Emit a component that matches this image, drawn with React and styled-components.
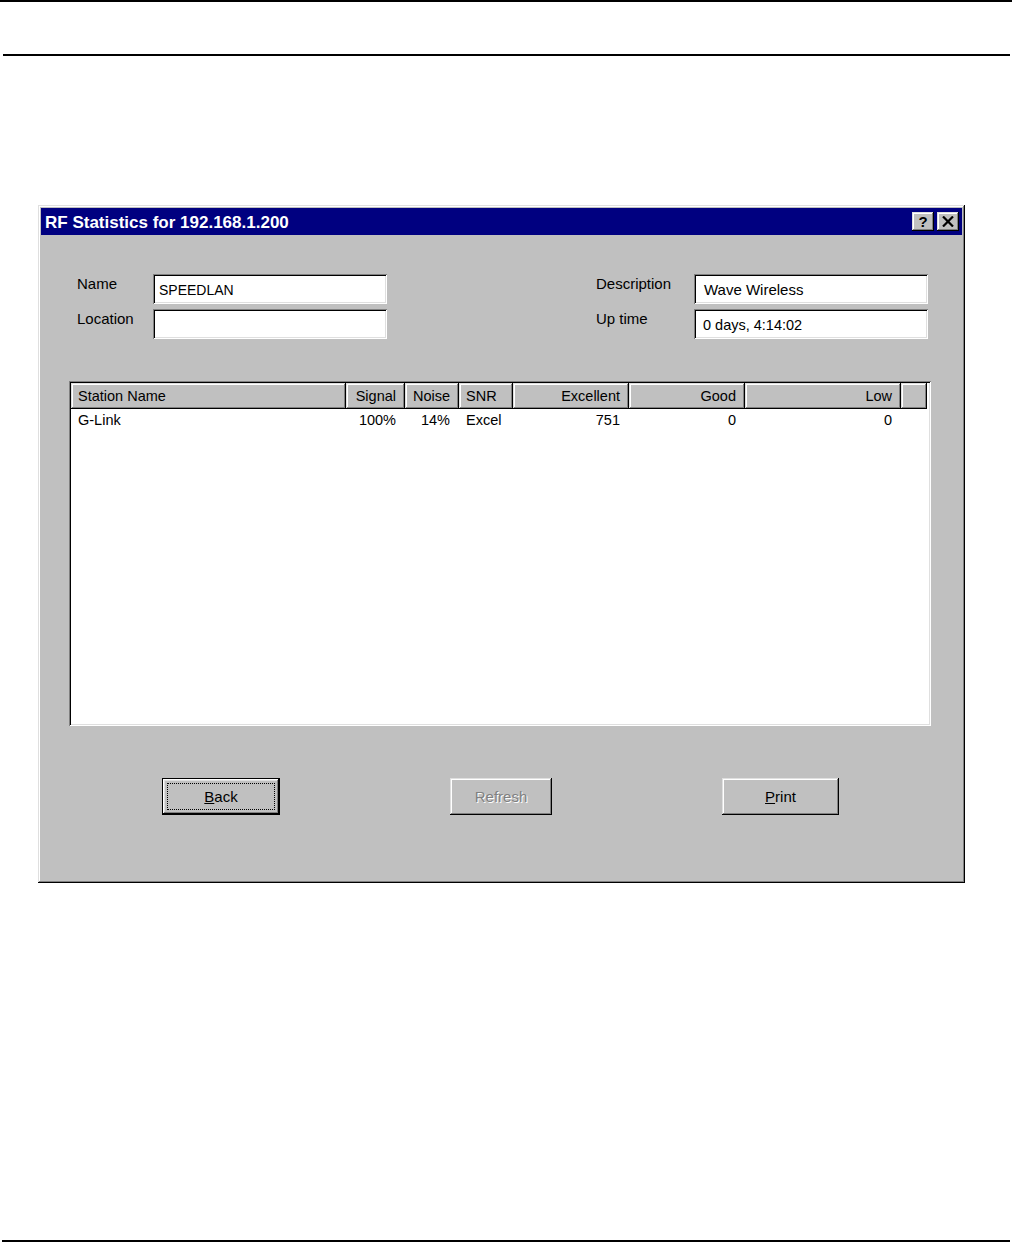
import React from "react";
import styled, { createGlobalStyle, css } from "styled-components";

const GlobalStyle = createGlobalStyle`
  html, body { margin: 0; padding: 0; background: #fff; }
  body { font-family: "Liberation Sans", Arial, sans-serif; color: #000; }
  * { box-sizing: border-box; }
`;

const Page = styled.div`
  width: 1012px;
  height: 1242px;
  display: flex;
  flex-direction: column;
  background: #fff;
`;

const TopRule = styled.div`
  height: 2px;
  background: #000;
`;

const HeaderRule = styled.div`
  height: 2px;
  margin: 52px 2px 0 3px;
  background: #000;
`;

const FooterRule = styled.div`
  height: 2px;
  margin: auto 2px 0 2px;
  background: #000;
`;

const raised = css`
  box-shadow: inset -1px -1px #000, inset 1px 1px #dfdfdf, inset -2px -2px #808080,
    inset 2px 2px #fff;
`;

const sunken = css`
  box-shadow: inset 1px 1px #808080, inset -1px -1px #fff, inset 2px 2px #000,
    inset -2px -2px #dfdfdf;
`;

const Dialog = styled.div`
  margin: 149px 0 0 38px;
  width: 927px;
  height: 678px;
  padding: 3px;
  background: #c0c0c0;
  ${raised};
  display: flex;
  flex-direction: column;
`;

const TitleBar = styled.div`
  height: 27px;
  background: #000080;
  display: flex;
  align-items: center;
  padding: 0 3px 0 4px;
  overflow: hidden;
`;

const TitleText = styled.div`
  flex: 1;
  align-self: flex-start;
  padding-top: 5px;
  color: #fff;
  font-weight: bold;
  font-size: 17px;
  line-height: 20px;
  white-space: nowrap;
`;

const CaptionButtons = styled.div`
  display: flex;
  gap: 3px;
  margin-top: -1px;
`;

const CaptionButton = styled.div`
  width: 22px;
  height: 19px;
  background: #c0c0c0;
  ${raised};
  display: flex;
  align-items: center;
  justify-content: center;
  font-weight: bold;
  font-size: 15px;
  line-height: 1;
  color: #000;
`;

const Body = styled.div`
  flex: 1;
  padding: 39px 34px 0 36px;
  display: flex;
  flex-direction: column;
`;

const FormRow = styled.div`
  display: flex;
  justify-content: space-between;
`;

const FieldGroup = styled.div`
  display: grid;
  grid-template-columns: ${(p) => p.$labelWidth}px 234px;
  row-gap: 5px;
`;

const Label = styled.div`
  font-size: 15px;
  line-height: 20px;
  white-space: nowrap;
`;

const TextBox = styled.div`
  height: 30px;
  background: #fff;
  ${sunken};
  display: flex;
  align-items: center;
  padding: 1px ${(p) => p.$pad || 7}px 0;
  font-size: ${(p) => p.$size || 14.5}px;
  white-space: nowrap;
`;

const ListView = styled.div`
  margin: 42px 0 0 -8px;
  width: 862px;
  height: 345px;
  background: #fff;
  padding: 2px;
  ${sunken};
  font-size: 14.5px;
`;

const Grid = styled.div`
  display: grid;
  grid-template-columns: ${(p) => p.$cols};
`;

const HeaderCell = styled.div`
  height: 26px;
  background: #c0c0c0;
  ${raised};
  display: flex;
  align-items: center;
  justify-content: ${(p) => (p.$align === "right" ? "flex-end" : "flex-start")};
  padding: 0 ${(p) => (p.$align === "right" ? 9 : 2)}px 1px ${(p) => (p.$align === "right" ? 2 : 7)}px;
  font-size: 14.5px;
  white-space: nowrap;
  overflow: hidden;
`;

const Cell = styled.div`
  height: 22px;
  display: flex;
  align-items: center;
  justify-content: ${(p) => (p.$align === "right" ? "flex-end" : "flex-start")};
  padding: 0 ${(p) => (p.$align === "right" ? 9 : 2)}px 0 ${(p) => (p.$align === "right" ? 2 : 7)}px;
  white-space: nowrap;
`;

const ButtonRow = styled.div`
  display: flex;
  margin: 52px 0 0 85px;
  gap: 170px;
`;

const Button = styled.div`
  position: relative;
  width: ${(p) => p.$w}px;
  height: 37px;
  background: #c0c0c0;
  display: flex;
  align-items: center;
  justify-content: center;
  font-size: 15px;
  color: ${(p) => (p.$disabled ? "#808080" : "#000")};
  text-shadow: ${(p) => (p.$disabled ? "1px 1px 0 #fff" : "none")};
  ${(p) =>
    p.$default
      ? css`
          border: 1px solid #000;
          box-shadow: inset -1px -1px #000, inset 1px 1px #fff, inset -2px -2px #808080,
            inset 2px 2px #dfdfdf;
        `
      : raised};
`;

const FocusRing = styled.span`
  position: absolute;
  inset: 4px;
  border: 1px dotted #000;
  pointer-events: none;
`;

const columns = [
  { key: "name", label: "Station Name", w: 275, align: "left" },
  { key: "signal", label: "Signal", w: 59, align: "right" },
  { key: "noise", label: "Noise", w: 54, align: "right" },
  { key: "snr", label: "SNR", w: 54, align: "left" },
  { key: "excellent", label: "Excellent", w: 116, align: "right" },
  { key: "good", label: "Good", w: 116, align: "right" },
  { key: "low", label: "Low", w: 156, align: "right" },
  { key: "pad", label: "", w: 26, align: "left" },
];

const rows = [
  { name: "G-Link", signal: "100%", noise: "14%", snr: "Excel", excellent: "751", good: "0", low: "0", pad: "" },
];

const colTemplate = columns.map((c) => `${c.w}px`).join(" ");

function CloseGlyph() {
  return (
    <svg width="12" height="11" viewBox="0 0 12 11">
      <path d="M1 0.5 L11 10.5 M11 0.5 L1 10.5" stroke="#000" strokeWidth="2.2" />
    </svg>
  );
}

export default function App() {
  return (
    <>
      <GlobalStyle />
      <Page>
        <TopRule />
        <HeaderRule />
        <Dialog>
          <TitleBar>
            <TitleText>RF Statistics for 192.168.1.200</TitleText>
            <CaptionButtons>
              <CaptionButton>?</CaptionButton>
              <CaptionButton>
                <CloseGlyph />
              </CaptionButton>
            </CaptionButtons>
          </TitleBar>
          <Body>
            <FormRow>
              <FieldGroup $labelWidth={76}>
                <Label>Name</Label>
                <TextBox $pad={6} $size={14}>SPEEDLAN</TextBox>
                <Label>Location</Label>
                <TextBox />
              </FieldGroup>
              <FieldGroup $labelWidth={98}>
                <Label>Description</Label>
                <TextBox $pad={10} $size={15}>Wave Wireless</TextBox>
                <Label>Up time</Label>
                <TextBox $pad={9}>0 days, 4:14:02</TextBox>
              </FieldGroup>
            </FormRow>
            <ListView>
              <Grid $cols={colTemplate}>
                {columns.map((c) => (
                  <HeaderCell key={c.key} $align={c.align}>
                    {c.label}
                  </HeaderCell>
                ))}
                {rows.map((r, i) =>
                  columns.map((c) => (
                    <Cell key={`${i}-${c.key}`} $align={c.align}>
                      {r[c.key]}
                    </Cell>
                  ))
                )}
              </Grid>
            </ListView>
            <ButtonRow>
              <Button $w={118} $default>
                <FocusRing />
                <span>
                  <u>B</u>ack
                </span>
              </Button>
              <Button $w={102} $disabled>
                Refresh
              </Button>
              <Button $w={117}>
                <span>
                  <u>P</u>rint
                </span>
              </Button>
            </ButtonRow>
          </Body>
        </Dialog>
        <FooterRule />
      </Page>
    </>
  );
}
